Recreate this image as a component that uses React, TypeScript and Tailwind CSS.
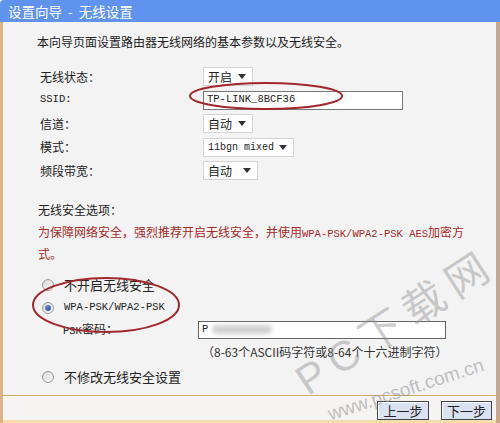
import React from "react";

const cjk = "font-['Noto_Sans_CJK_SC','Noto_Sans',sans-serif]";
const mono = "font-['Liberation_Mono',monospace]";

const Arrow = () => (
  <svg width="8" height="5" viewBox="0 0 8 5" className="shrink-0">
    <path d="M0 0 L8 0 L4 5 Z" fill="#333" />
  </svg>
);

const Select = ({ label, width, isMono }: { label: string; width: string; isMono?: boolean }) => (
  <div
    className={`${width} h-[19px] bg-white border border-[#d4d4d4] flex items-center justify-between pl-[4px] pr-[6px] text-[12px] text-[#222]`}
  >
    <span className={isMono ? `${mono} text-[10px]` : ""}>{label}</span>
    <Arrow />
  </div>
);

const Radio = ({ checked }: { checked?: boolean }) => (
  <div className="w-[12px] h-[12px] rounded-full border border-[#9a9a9a] bg-gradient-to-br from-[#d8d8d8] to-[#fafafa] flex items-center justify-center shrink-0">
    {checked && <div className="w-[6px] h-[6px] rounded-full bg-gradient-to-br from-[#6a93d6] to-[#1f4f9e]" />}
  </div>
);

const Row = ({ label, children, isMono }: { label: string; children: React.ReactNode; isMono?: boolean }) => (
  <div className="grid grid-cols-[163px_1fr] h-[23.5px] items-center">
    <span className={isMono ? `${mono} text-[10.5px]` : ""}>{label}</span>
    <div>{children}</div>
  </div>
);

export default function App() {
  return (
    <div className={`${cjk} w-[500px] h-[423px] relative overflow-hidden bg-[#f3f3f3] text-[12px] text-[#222]`}>
      {/* Title bar */}
      <div className="h-[22px] bg-[#6093ee] rounded-tl-[4px] flex items-center pl-[8px] text-white text-[13.5px] whitespace-pre">
        设置向导 <span className="px-[3px]">-</span> 无线设置
      </div>

      <div className="flex h-[401px]">
        <div className="w-[3px] bg-[#d9b48a]" />
        <div className="flex-1 flex flex-col">
          <div className="h-[373px] flex flex-col">
            <p className="pl-[34px] mt-[12px] leading-[16px]">本向导页面设置路由器无线网络的基本参数以及无线安全。</p>

            <div className="pl-[37px] mt-[15px]">
              <Row label="无线状态：">
                <Select label="开启" width="w-[50px]" />
              </Row>
              <Row label="SSID:" isMono>
                <div className={`w-[200px] h-[19px] bg-white border border-[#777] flex items-center pl-[3px] ${mono} text-[10.5px]`}>
                  TP-LINK_8BCF36
                </div>
              </Row>
              <Row label="信道：">
                <Select label="自动" width="w-[50px]" />
              </Row>
              <Row label="模式：">
                <Select label="11bgn mixed" width="w-[91px]" isMono />
              </Row>
              <Row label="频段带宽：">
                <Select label="自动" width="w-[55px]" />
              </Row>
            </div>

            <div className="pl-[35px] mt-[17px] leading-[19px]">
              <p>无线安全选项：</p>
              <p className="text-[#a52a2a] mt-[3px]">
                为保障网络安全，强烈推荐开启无线安全，并使用<span className={`${mono} text-[10.5px]`}>WPA-PSK/WPA2-PSK AES</span>加密方
                <br />
                式。
              </p>
            </div>

            <div className="pl-[39px] mt-[10px] flex flex-col">
              <div className="flex items-center gap-[10px] h-[24px]">
                <Radio />
                <span className="text-[13px]">不开启无线安全</span>
              </div>
              <div className="flex items-center gap-[10px] h-[22px]">
                <Radio checked />
                <span className={`${mono} text-[10.5px]`}>WPA-PSK/WPA2-PSK</span>
              </div>
              <div className="grid grid-cols-[156px_1fr] h-[22px] items-center">
                <span className="pl-[21px]">
                  <span className={`${mono} text-[10.5px]`}>PSK</span>密码：
                </span>
                <div className="w-[248px] h-[18px] bg-white border border-[#666] flex items-center pl-[3px] gap-[4px]">
                  <span className={`${mono} text-[10.5px]`}>P</span>
                  <div className="w-[60px] h-[9px] bg-[#d0d0d0] rounded-full blur-[2px]" />
                </div>
              </div>
              <div className="pl-[160px] h-[22px] flex items-center text-[12px] text-[#333]">
                （8-63个ASCII码字符或8-64个十六进制字符）
              </div>
              <div className="flex items-center gap-[10px] h-[28px]">
                <Radio />
                <span className="text-[13px]">不修改无线安全设置</span>
              </div>
            </div>
          </div>

          {/* Footer */}
          <div className="h-[1px] bg-[#c8a878]" />
          <div className="h-[1px] bg-white" />
          <div className="flex-1 flex justify-end items-start gap-[12px] pr-[4px] pt-[4px] bg-[#f6f4f2]">
            <button className="w-[52px] h-[19px] border border-[#444] bg-[#d9e1f2] shadow-[inset_1px_1px_0_#fff] text-[13px] leading-none">
              上一步
            </button>
            <button className="w-[51px] h-[19px] border border-[#444] bg-[#d9e1f2] shadow-[inset_1px_1px_0_#fff] text-[13px] leading-none">
              下一步
            </button>
          </div>
          <div className="h-[3px] bg-[#f3dcae]" />
        </div>
        <div className="w-[4px] bg-[#c9a88a]" />
      </div>

      {/* Red annotation ellipses */}
      <svg className="absolute inset-0 pointer-events-none" width="500" height="423">
        <ellipse cx="266" cy="96" rx="76" ry="13" fill="none" stroke="#a3262c" strokeWidth="2" />
        <ellipse cx="106" cy="305" rx="73" ry="27" fill="none" stroke="#a3262c" strokeWidth="2" />
      </svg>

      {/* Watermark */}
      <div className="absolute left-[396px] top-[322px] -translate-x-1/2 -translate-y-1/2 -rotate-[33deg] whitespace-nowrap text-[42px] tracking-[9px] text-[#8f8f8f]/45 font-['Liberation_Sans','Noto_Sans_CJK_SC',sans-serif] pointer-events-none">
        PC下载网
      </div>
      <div className="absolute left-[406px] top-[390px] -translate-x-1/2 -translate-y-1/2 -rotate-[18deg] whitespace-nowrap text-[19px] text-[#8f8f8f]/55 font-['Liberation_Sans',sans-serif] pointer-events-none">
        www.pcsoft.com.cn
      </div>
    </div>
  );
}
